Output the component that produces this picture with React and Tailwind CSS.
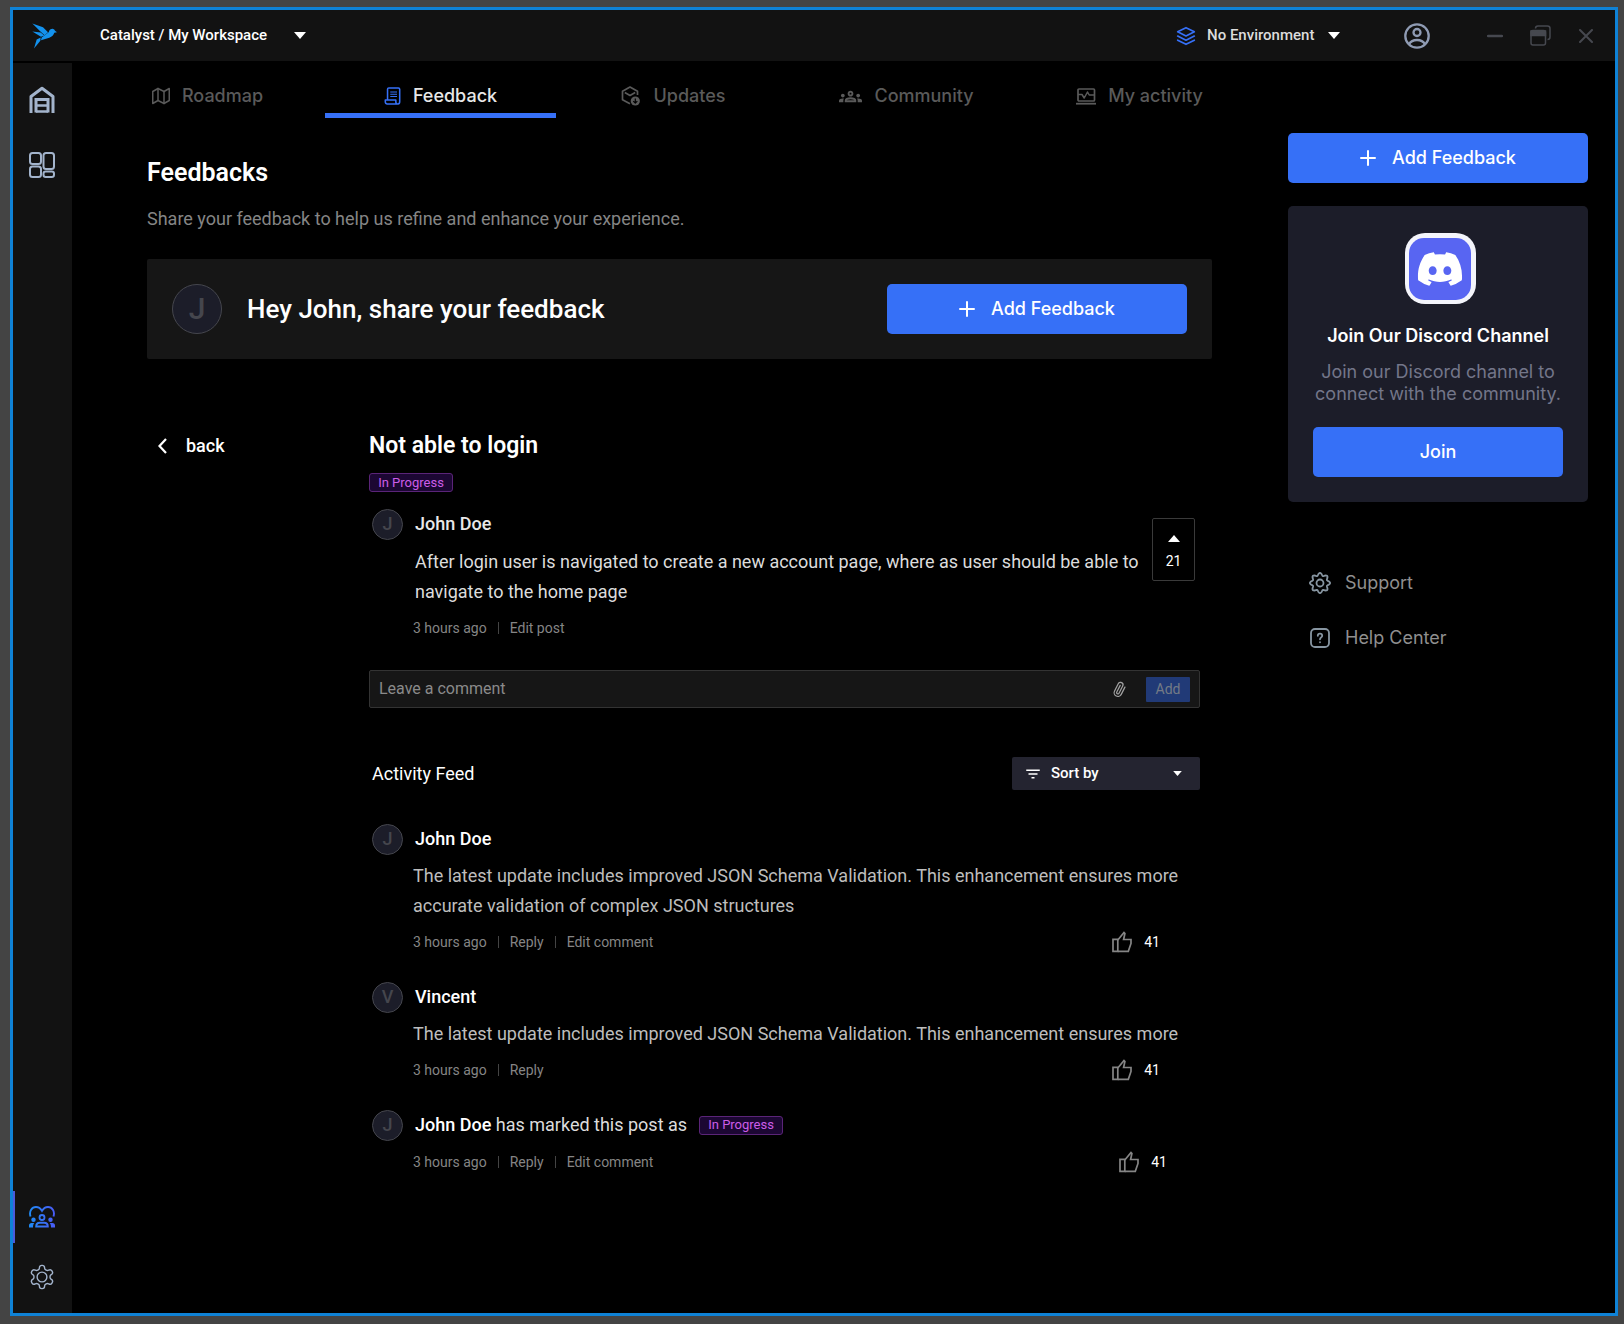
import { useState } from 'react'
import { FaDiscord } from 'react-icons/fa'
import { FiLayers, FiMap, FiPaperclip } from 'react-icons/fi'
import { MdOutlineGroups, MdFilterList } from 'react-icons/md'
import clsx from 'clsx'

const FEED = [
  {
    id: 1,
    author: 'John Doe',
    text: 'The latest update includes improved JSON Schema Validation. This enhancement ensures more accurate validation of complex JSON structures',
    time: '3 hours ago',
    actions: ['Reply', 'Edit comment'],
    likes: 41,
  },
  {
    id: 2,
    author: 'Vincent',
    text: 'The latest update includes improved JSON Schema Validation. This enhancement ensures more',
    time: '3 hours ago',
    actions: ['Reply'],
    likes: 41,
  },
  {
    id: 3,
    author: 'John Doe',
    status: 'In Progress',
    time: '3 hours ago',
    actions: ['Reply', 'Edit comment'],
    likes: 41,
  },
]

/* ── Icons ──────────────────────────────────────────────────────── */

function BirdLogo() {
  return (
    <svg width="25" height="26" viewBox="0 0 75 77" fill="#1392ee" aria-hidden="true">
      <path d="M1 1 L33 12 L48 27 L38 36 L26 26 Z" />
      <path d="M1 25 L26 28 L37 37 L27 41 Z" />
      <path d="M50 27 Q53 17 62 17 Q68 18 69 23 L75 27 L67 29 Q64 39 52 44 L27 51 L29 43 Z" />
      <path d="M26 43 L25 53 L6 76 L14 49 Z" />
    </svg>
  )
}

function HomeIcon() {
  return (
    <svg width="26" height="28" viewBox="0 0 26 28" fill="none" stroke="#a3b4cc" strokeWidth="3" aria-hidden="true">
      <path d="M2 27V10.5L13 2.2l11 8.300V27" strokeLinejoin="round" />
      <path d="M7 26.500V13.500h12v13" />
      <path d="M7 19.500h12M7 25.500h12" strokeWidth="2.500" />
    </svg>
  )
}

function BoardIcon() {
  return (
    <svg width="26" height="26" viewBox="0 0 26 26" fill="none" stroke="#a3b4cc" strokeWidth="2" aria-hidden="true">
      <rect x="1" y="1" width="11" height="11" rx="2.500" />
      <rect x="1" y="14.500" width="11" height="10.500" rx="2.500" />
      <rect x="14.500" y="1" width="10.500" height="16" rx="2.500" />
      <rect x="14.500" y="19.500" width="10.500" height="5.500" rx="2.200" />
    </svg>
  )
}

function CommunityHeartIcon() {
  return (
    <svg width="26" height="22" viewBox="0 0 26 22" fill="none" aria-hidden="true">
      <defs>
        <linearGradient id="heart" x1="0" y1="0" x2="26" y2="0" gradientUnits="userSpaceOnUse">
          <stop stopColor="#1f8bf5" />
          <stop offset="1" stopColor="#4a5bf5" />
        </linearGradient>
      </defs>
      <path d="M1.500 10.500C-.2 5 3 1 7 1c2.700 0 4.600 1.500 6 3.800C14.400 2.500 16.300 1 19 1c4 0 7.200 4 5.500 9.500" stroke="url(#heart)" strokeWidth="1.900" />
      <circle cx="13" cy="11.500" r="2.500" stroke="url(#heart)" strokeWidth="1.800" />
      <circle cx="4.500" cy="13.700" r="2.200" fill="url(#heart)" />
      <circle cx="21.500" cy="13.700" r="2.200" fill="url(#heart)" />
      <path d="M0 21.500v-2c0-1.600 1-2.500 2.600-2.500h2.600c-.9 1.200-1.200 2.500-1.200 4.500zM26 21.500v-2c0-1.600-1-2.500-2.600-2.500h-2.600c.9 1.200 1.200 2.500 1.200 4.500z" fill="url(#heart)" />
      <path d="M7.200 20.500c0-2.700 1.600-3.700 3.600-3.700h4.400c2 0 3.600 1 3.600 3.700z" stroke="url(#heart)" strokeWidth="1.900" />
    </svg>
  )
}

function GearIcon() {
  return (
    <svg width="28" height="28" viewBox="0 0 24 24" fill="none" stroke="#a3b4cc" strokeWidth="1.200" strokeLinejoin="round" aria-hidden="true">
      <path d="M12.220 2h-.44a2 2 0 0 0-2 2v.18a2 2 0 0 1-1 1.730l-.43.25a2 2 0 0 1-2 0l-.15-.08a2 2 0 0 0-2.730.730l-.22.38a2 2 0 0 0 .730 2.730l.15.1a2 2 0 0 1 1 1.720v.51a2 2 0 0 1-1 1.740l-.15.09a2 2 0 0 0-.730 2.730l.22.38a2 2 0 0 0 2.730.730l.15-.08a2 2 0 0 1 2 0l.43.25a2 2 0 0 1 1 1.730V20a2 2 0 0 0 2 2h.44a2 2 0 0 0 2-2v-.18a2 2 0 0 1 1-1.730l.43-.25a2 2 0 0 1 2 0l.15.08a2 2 0 0 0 2.730-.730l.22-.39a2 2 0 0 0-.730-2.730l-.15-.08a2 2 0 0 1-1-1.740v-.5a2 2 0 0 1 1-1.740l.15-.09a2 2 0 0 0 .730-2.730l-.22-.38a2 2 0 0 0-2.730-.730l-.15.080a2 2 0 0 1-2 0l-.43-.25a2 2 0 0 1-1-1.730V4a2 2 0 0 0-2-2z" />
      <circle cx="12" cy="12" r="4.200" />
    </svg>
  )
}

// Eight soft teeth around the rim
const COG_POINTS = Array.from({ length: 96 }, (_, i) => {
  const a = (i / 96) * Math.PI * 2
  const r = 8.8 + 1.3 * Math.cos(8 * a)
  return `${(11 + r * Math.sin(a)).toFixed(2)},${(11 - r * Math.cos(a)).toFixed(2)}`
}).join(' ')

function CogIcon() {
  return (
    <svg width="22" height="22" viewBox="0 0 22 22" fill="none" stroke="currentColor" strokeWidth="1.800" strokeLinejoin="round" aria-hidden="true">
      <polygon points={COG_POINTS} />
      <circle cx="11" cy="11" r="3.500" />
    </svg>
  )
}

function AccountIcon() {
  return (
    <svg width="26" height="26" viewBox="0 0 26 26" fill="none" stroke="#8f9bb3" strokeWidth="2.300" aria-hidden="true">
      <circle cx="13" cy="13" r="11.700" />
      <circle cx="13" cy="9.500" r="3.500" />
      <path d="M5 21.300c1.600-3 4.500-4.300 8-4.300s6.400 1.300 8 4.300" />
    </svg>
  )
}

function ReceiptIcon() {
  return (
    <svg width="17" height="18" viewBox="0 0 18 20" fill="none" stroke="currentColor" strokeWidth="1.700" strokeLinejoin="round" aria-hidden="true">
      <path d="M3.500 14.500V2.500c0-1 .5-1.500 1.500-1.500h10.500c.9 0 1.500.5 1.500 1.500v14c0 1.500-.8 2.300-2 2.300" />
      <path d="M1 14.500h11.700v2.300c0 1.300.8 2 1.900 2H3.200C1.800 18.800 1 18 1 16.800z" />
      <path d="M6.500 5.500h7.500M6.500 8h7.500M6.500 10.500h7.500" strokeWidth="1.200" />
    </svg>
  )
}

function PackageIcon() {
  return (
    <svg width="20" height="20" viewBox="0 0 20 20" fill="none" stroke="currentColor" strokeWidth="1.700" strokeLinejoin="round" aria-hidden="true">
      <path d="M9 17.800l-7.500-4V5.300L9 1l7.500 4.300v3.700" />
      <path d="M3.800 6.600L9 9.500l5.200-2.900" />
      <circle cx="14.300" cy="15" r="4.600" fill="currentColor" stroke="none" />
      <path d="M14.300 12.500v4.500M12.300 15.200l2 2 2-2" stroke="#000" strokeWidth="1.200" />
    </svg>
  )
}

function ActivityIcon() {
  return (
    <svg width="20" height="17" viewBox="0 0 20 17" fill="none" stroke="currentColor" strokeWidth="1.700" aria-hidden="true">
      <rect x="2" y="1" width="16.500" height="12" rx="1" />
      <path d="M2 6.500h4l2.200 3.500 3.300-6 1.700 3h5" strokeLinejoin="round" strokeWidth="1.500" />
      <path d="M0 15.700h20" strokeWidth="1.800" />
    </svg>
  )
}

function ThumbIcon() {
  return (
    <svg width="20" height="22" viewBox="0 0 20 22" fill="none" stroke="#858585" strokeWidth="1.700" aria-hidden="true">
      <path d="M1 8.300h4.800v12H1z" />
      <path d="M5.800 9L12 1.500l.9.900-1.300 6.100h7.400v3.900l-2.700 7.900H5.800" />
    </svg>
  )
}

function HelpIcon() {
  return (
    <svg width="20" height="20" viewBox="0 0 20 20" fill="none" stroke="currentColor" strokeWidth="1.800" strokeLinecap="round" aria-hidden="true">
      <rect x="1" y="1" width="18" height="18" rx="4" />
      <path d="M7.800 7.800c0-1.400 1-2.200 2.200-2.200s2.200.8 2.200 2.100c0 1.600-2.200 1.700-2.200 3.600M10 14.200v.1" />
    </svg>
  )
}

function PlusIcon() {
  return (
    <svg width="16" height="16" viewBox="0 0 16 16" stroke="#fff" strokeWidth="2" strokeLinecap="round" aria-hidden="true">
      <path d="M8 1v14M1 8h14" />
    </svg>
  )
}

function Caret({ className }) {
  return (
    <svg viewBox="0 0 12 7" fill="currentColor" className={className} aria-hidden="true">
      <path d="M0 0h12L6 7z" />
    </svg>
  )
}

/* ── Shared pieces ──────────────────────────────────────────────── */

function Avatar({ name, large = false }) {
  return (
    <span
      className={clsx(
        'flex shrink-0 items-center justify-center rounded-full border border-[#45464d] bg-[#1c1d29] font-medium text-[#45464d]',
        large ? 'size-[50px] text-3xl' : 'size-[31px] text-lg'
      )}
    >
      {name[0]}
    </span>
  )
}

function StatusBadge({ children }) {
  return (
    <span className="inline-flex h-[19px] w-[84px] items-center justify-center rounded-[3px] border border-[#5a2478] bg-[#1c0733] text-[13px] leading-4 text-[#cc5de8]">
      {children}
    </span>
  )
}

function AddFeedbackButton() {
  return (
    <button className="flex h-[50px] w-[300px] items-center justify-center gap-4 rounded-[5px] bg-[#3670f7] font-[Inter,sans-serif] text-lg font-medium text-white">
      <PlusIcon />
      Add Feedback
    </button>
  )
}

function Meta({ time, actions, className }) {
  return (
    <div className={clsx('flex items-center text-sm leading-5 text-[#858585]', className)}>
      <span>{time}</span>
      {actions.map((action) => (
        <span key={action} className="flex items-center">
          <span className="mx-[11px] h-3 w-px bg-[#444]" />
          <button>{action}</button>
        </span>
      ))}
    </div>
  )
}

/* ── Window chrome ──────────────────────────────────────────────── */

function TitleBar() {
  return (
    <header className="flex h-[53px] shrink-0 items-center border-b-2 border-black bg-[#121212] pr-[22px] pl-[19px]">
      <BirdLogo />
      <div className="relative ml-[43px] flex items-center">
        <select aria-label="Workspace" className="appearance-none bg-transparent pr-[38px] text-[15px] font-medium text-white outline-none">
          <option>Catalyst / My Workspace</option>
        </select>
        <Caret className="pointer-events-none absolute right-0 h-[7px] w-3 text-white" />
      </div>

      <div className="ml-auto flex items-center">
        <FiLayers size={20} className="text-[#3670f7]" />
        <div className="relative ml-[11px] flex items-center">
          <select aria-label="Environment" className="appearance-none bg-transparent pr-[25px] text-[15px] font-medium text-[#dcdcdc] outline-none">
            <option>No Environment</option>
          </select>
          <Caret className="pointer-events-none absolute right-0 h-[7px] w-3 text-white" />
        </div>
        <button aria-label="Account" className="ml-16"><AccountIcon /></button>
        <button aria-label="Minimize" className="ml-[57px]">
          <svg width="16" height="16" viewBox="0 0 16 16" stroke="#46484f" strokeWidth="2.500" strokeLinecap="round">
            <path d="M1 8h14" />
          </svg>
        </button>
        <button aria-label="Restore" className="ml-[27px]">
          <svg width="21" height="21" viewBox="0 0 21 21" fill="none" stroke="#46484f" strokeWidth="1.500">
            <rect x="1" y="5.500" width="14.500" height="14.500" rx="2" />
            <path d="M1 6h14.500v4.500H1z" fill="#46484f" />
            <path d="M5.500 3.500C5.500 1.800 6.300 1 8 1h9.500C19.300 1 20 1.800 20 3.500v8.500c0 1.800-.7 2.500-2.500 2.500" />
          </svg>
        </button>
        <button aria-label="Close" className="ml-7">
          <svg width="14" height="14" viewBox="0 0 14 14" stroke="#46484f" strokeWidth="2" strokeLinecap="round">
            <path d="M1 1l12 12M13 1L1 13" />
          </svg>
        </button>
      </div>
    </header>
  )
}

function Sidebar() {
  return (
    <aside className="flex w-[59px] shrink-0 flex-col bg-[#121212] pt-[23px] pb-[22px]">
      <a href="#home" aria-label="Home" className="pl-4"><HomeIcon /></a>
      <a href="#boards" aria-label="Boards" className="mt-[38px] pl-4"><BoardIcon /></a>
      <a
        href="#community"
        aria-label="Community"
        className="mt-auto flex h-[52px] items-center border-l-2 border-[#4a5bdc] pl-3.5"
      >
        <CommunityHeartIcon />
      </a>
      <a href="#settings" aria-label="Settings" className="mt-5 pl-[15px]"><GearIcon /></a>
    </aside>
  )
}

const TABS = [
  { label: 'Roadmap',     icon: <FiMap size={18} /> },
  { label: 'Feedback',    icon: <ReceiptIcon /> },
  { label: 'Updates',     icon: <PackageIcon /> },
  { label: 'Community',   icon: <MdOutlineGroups size={23} /> },
  { label: 'My activity', icon: <ActivityIcon /> },
]

function Tabs() {
  const [active, setActive] = useState('Feedback')

  return (
    <nav className="mr-[33px] ml-5 grid grid-cols-5 gap-[2px]">
      {TABS.map(({ label, icon }) => {
        const isActive = label === active
        return (
          <button
            key={label}
            onClick={() => setActive(label)}
            className={clsx(
              'flex h-[55px] items-center justify-center gap-3 border-b-[5px] pt-4 font-[Inter,sans-serif] text-lg font-medium',
              isActive ? 'border-[#3670f7] text-[#e8e8e8]' : 'border-transparent text-[#5a5a5a]'
            )}
          >
            <span className={isActive ? 'text-[#3670f7]' : undefined}>{icon}</span>
            {label}
          </button>
        )
      })}
    </nav>
  )
}

/* ── Post and feed ──────────────────────────────────────────────── */

function Post() {
  return (
    <section>
      <h2 className="text-[23px] leading-8 font-semibold text-white">Not able to login</h2>
      <div className="mt-[11px] flex"><StatusBadge>In Progress</StatusBadge></div>

      <div className="mt-4 flex pl-[3px]">
        <div className="min-w-0 flex-1">
          <div className="flex items-center gap-3">
            <Avatar name="John Doe" />
            <p className="text-lg leading-8 font-medium text-[#e8e8e8]">John Doe</p>
          </div>
          <p className="mt-[7px] pl-[43px] text-lg leading-[30px] text-[#dcdcdc]">
            After login user is navigated to create a new account page, where as user should be able to
            navigate to the home page
          </p>
          <Meta time="3 hours ago" actions={['Edit post']} className="mt-[11px] pl-[41px]" />
        </div>
        <button className="mt-[10px] mr-[5px] ml-2 flex h-[63px] w-[43px] shrink-0 flex-col items-center rounded-xs border border-[#3a3a3a] pt-4 text-sm text-white">
          <Caret className="h-[7px] w-3 rotate-180" />
          <span className="mt-2 leading-[22px]">21</span>
        </button>
      </div>

      <form className="mt-8 flex h-[38px] items-center rounded-xs border border-[#333] bg-[#161616] px-[9px]">
        <input
          type="text"
          aria-label="Leave a comment"
          placeholder="Leave a comment"
          className="min-w-0 flex-1 bg-transparent text-base text-white outline-none placeholder:text-[#8a8a8a]"
        />
        <button type="button" aria-label="Attach a file" className="mr-[19px] text-[#a0a0a0]">
          <FiPaperclip size={15} className="-rotate-[18deg]" />
        </button>
        <button type="button" className="h-[25px] w-11 rounded-[1px] bg-[#213a77] text-sm text-[#747a86]">
          Add
        </button>
      </form>
    </section>
  )
}

function FeedItem({ item }) {
  return (
    <li>
      <div className="flex items-center gap-3">
        <Avatar name={item.author} />
        <p className="text-lg leading-8 text-[#dcdcdc]">
          <span className="font-medium text-white">{item.author}</span>
          {item.status && ' has marked this post as'}
        </p>
        {item.status && <StatusBadge>{item.status}</StatusBadge>}
      </div>
      {item.text && (
        <p className="mt-1.5 pr-3 pl-[41px] text-lg leading-[30px] text-[#bdbdbd]">{item.text}</p>
      )}
      <div className={clsx('mt-[11px] flex h-5 items-center justify-between pl-[41px]', item.status ? 'pr-[33px]' : 'pr-10')}>
        <Meta time={item.time} actions={item.actions} />
        <button className="flex items-center gap-3 text-sm leading-5 text-white">
          <ThumbIcon />
          {item.likes}
        </button>
      </div>
    </li>
  )
}

function ActivityFeed() {
  return (
    <section className="mt-[49px] pl-[3px]">
      <div className="flex items-center justify-between">
        <h3 className="text-lg leading-[30px] text-white">Activity Feed</h3>
        <div className="relative flex h-[33px] w-[188px] items-center rounded-xs bg-[#242430]">
          <MdFilterList size={18} className="pointer-events-none absolute left-3 text-white" />
          <select aria-label="Sort by" className="size-full appearance-none bg-transparent pl-[39px] text-[15px] font-medium text-white outline-none">
            <option>Sort by</option>
          </select>
          <Caret className="pointer-events-none absolute right-[18px] h-[5px] w-[9px] text-white" />
        </div>
      </div>
      <ul className="mt-[33px] space-y-[29px]">
        {FEED.map((item) => <FeedItem key={item.id} item={item} />)}
      </ul>
    </section>
  )
}

/* ── Right rail ─────────────────────────────────────────────────── */

function RightRail() {
  return (
    <aside className="mr-[27px] w-[300px] shrink-0 pt-[70px] font-[Inter,sans-serif]">
      <AddFeedbackButton />

      <div className="mt-[23px] flex flex-col items-center rounded-[5px] bg-[#1c1d29] px-[25px] pt-[27px] pb-[25px]">
        <div className="ml-1 flex size-[71px] items-center justify-center rounded-[20px] bg-[#f4f5fb]">
          <div className="flex size-[62px] items-center justify-center rounded-[15px] bg-[#5865f2]">
            <FaDiscord size={48} className="text-white" />
          </div>
        </div>
        <h2 className="mt-5 text-lg leading-6 font-semibold text-white">Join Our Discord Channel</h2>
        <p className="mt-[13px] text-center text-lg leading-[22px] text-[#737689]">
          Join our Discord channel to connect with the community.
        </p>
        <button className="mt-[22px] h-[50px] w-full rounded-[5px] bg-[#3670f7] text-lg font-medium text-white">
          Join
        </button>
      </div>

      <ul className="mt-[67px] space-y-[27px] pl-[21px] text-lg leading-7 text-[#8f8f8f]">
        <li>
          <a href="#support" className="flex items-center gap-3.5">
            <span className="text-[#8795a1]"><CogIcon /></span>
            Support
          </a>
        </li>
        <li>
          <a href="#help" className="flex items-center gap-3.5">
            <span className="flex w-[22px] justify-center text-[#8795a1]"><HelpIcon /></span>
            Help Center
          </a>
        </li>
      </ul>
    </aside>
  )
}

export default function App() {
  return (
    <div className="flex min-h-screen bg-[#444] pt-[7px] pr-[6px] pb-2 pl-[10px] font-[Roboto,sans-serif]">
      <div className="flex min-w-0 flex-1 flex-col border-[3px] border-[#0f82d6] bg-black">
        <TitleBar />
        <div className="flex flex-1">
          <Sidebar />

          <main className="min-w-0 flex-1 pb-16">
            <Tabs />

            <div className="mr-[76px] ml-[75px]">
              <h1 className="mt-[39px] text-[25px] leading-8 font-semibold text-white">Feedbacks</h1>
              <p className="mt-[18px] text-lg leading-6 text-[#858585]">
                Share your feedback to help us refine and enhance your experience.
              </p>

              <div className="mt-7 flex h-[100px] items-center rounded-xs bg-[#161616] px-[25px]">
                <Avatar name="John" large />
                <p className="ml-[25px] text-[26px] font-medium text-white">Hey John, share your feedback</p>
                <div className="ml-auto"><AddFeedbackButton /></div>
              </div>

              <div className="mt-[71px] flex items-start">
                <a href="#back" className="flex h-8 w-[222px] shrink-0 items-center gap-[19px] pl-[11px] text-lg font-medium text-white">
                  <svg width="9" height="16" viewBox="0 0 9 16" fill="none" stroke="currentColor" strokeWidth="2.200">
                    <path d="M8 1L1.500 8 8 15" />
                  </svg>
                  back
                </a>
                <div className="mr-3 min-w-0 flex-1">
                  <Post />
                  <ActivityFeed />
                </div>
              </div>
            </div>
          </main>

          <RightRail />
        </div>
      </div>
    </div>
  )
}
